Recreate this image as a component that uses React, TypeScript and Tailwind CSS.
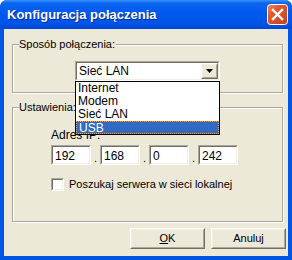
import * as React from "react";

const font = { fontFamily: '"Liberation Sans", Arial, sans-serif' };

function Sunken({ className = "", children }: { className?: string; children?: React.ReactNode }) {
  return (
    <div className={`border border-t-[#aca899] border-l-[#aca899] border-b-white border-r-white ${className}`}>
      <div className="h-full w-full border border-t-[#716f64] border-l-[#716f64] border-b-[#f1efe2] border-r-[#f1efe2] bg-white">
        {children}
      </div>
    </div>
  );
}

function Raised({ className = "", children }: { className?: string; children?: React.ReactNode }) {
  return (
    <div className={`border border-t-white border-l-white border-b-[#716f64] border-r-[#716f64] ${className}`}>
      <div className="flex h-full w-full items-center justify-center border border-t-[#f1efe2] border-l-[#f1efe2] border-b-[#aca899] border-r-[#aca899] bg-[#ece9d8]">
        {children}
      </div>
    </div>
  );
}

function Group({ label, className = "", children }: { label: string; className?: string; children?: React.ReactNode }) {
  return (
    <div
      className={`relative ml-2 w-[271px] border border-[#aca899] shadow-[inset_1px_1px_0_#fff,1px_1px_0_#fff] ${className}`}
    >
      <span className="absolute -top-[7px] left-[6px] bg-[#ece9d8] pr-[1px] text-[11px] leading-[13px] text-black">
        {label}
      </span>
      {children}
    </div>
  );
}

function CloseButton() {
  return (
    <svg width="21" height="21" viewBox="0 0 21 21">
      <defs>
        <linearGradient id="cb" x1="0" y1="0" x2="1" y2="1">
          <stop offset="0" stopColor="#f08a63" />
          <stop offset="0.35" stopColor="#e2582b" />
          <stop offset="1" stopColor="#c3401c" />
        </linearGradient>
      </defs>
      <rect x="0.5" y="0.5" width="20" height="20" rx="3" fill="url(#cb)" stroke="#fff" />
      <path d="M6 6 L15 15 M15 6 L6 15" stroke="#fff" strokeWidth="2.4" strokeLinecap="square" />
    </svg>
  );
}

const options = ["Internet", "Modem", "Sieć LAN", "USB"];

function IpField({ value }: { value: string }) {
  return (
    <Sunken className="h-[20px] w-[40px]">
      <div className="pl-[2px] pt-[2px] text-[12px] leading-[14px] text-black">{value}</div>
    </Sunken>
  );
}

export default function App() {
  const ip = ["192", "168", "0", "242"];
  return (
    <div className="h-[260px] w-[292px] bg-white" style={font}>
      <div className="flex h-full w-full flex-col overflow-hidden rounded-t-[7px] bg-[#0055e5]">
        <div className="flex h-[29px] shrink-0 items-center justify-between bg-[linear-gradient(to_bottom,#3d95ff_0%,#0a66f0_10%,#0058ee_45%,#0055e8_80%,#0046d6_100%)] pl-[7px] pr-[4px]">
          <span className="pt-[1px] text-[13px] font-bold text-white [text-shadow:1px_1px_0_#0a2a8c]">
            Konfiguracja połączenia
          </span>
          <CloseButton />
        </div>
        <div className="mx-[4px] mb-[4px] flex flex-1 flex-col bg-[#ece9d8] pb-[7px]">
          <Group label="Sposób połączenia:" className="mt-[15px] h-[49px]">
            <div className="pl-[62px] pt-[16px]">
              <div className="relative z-10 w-[145px]">
                <Sunken className="h-[20px] w-[145px]">
                  <div className="flex h-full items-center justify-between">
                    <span className="pl-[2px] text-[12px] leading-[14px] text-black">Sieć LAN</span>
                    <Raised className="h-[16px] w-[17px]">
                      <svg width="7" height="4" viewBox="0 0 7 4">
                        <path d="M0 0 H7 L3.5 4 Z" fill="#000" />
                      </svg>
                    </Raised>
                  </div>
                </Sunken>
                <ul className="absolute left-0 top-full w-[145px] border border-black bg-white">
                  {options.map((o) => (
                    <li
                      key={o}
                      className={`h-[13px] pl-[2px] text-[12px] leading-[13px] ${
                        o === "USB"
                          ? "border border-dotted border-[#e8a848] bg-[#316ac5] pl-[1px] leading-[11px] text-white"
                          : "text-black"
                      }`}
                    >
                      {o}
                    </li>
                  ))}
                </ul>
              </div>
            </div>
          </Group>

          <Group label="Ustawienia:" className="mt-[14px] h-[115px]">
            <div className="pl-[38px] pt-[21px]">
              <div className="text-[12px] leading-[13px] text-black">Adres IP:</div>
              <div className="mt-[3px] flex items-end">
                {ip.map((v, i) => (
                  <React.Fragment key={i}>
                    {i > 0 && (
                      <span className="w-[9px] pb-[1px] text-center text-[11px] leading-[11px] text-black">.</span>
                    )}
                    <IpField value={v} />
                  </React.Fragment>
                ))}
              </div>
              <div className="mt-[13px] flex items-center gap-[5px]">
                <Sunken className="h-[13px] w-[13px]" />
                <span className="text-[11px] leading-[13px] text-black">Poszukaj serwera w sieci lokalnej</span>
              </div>
            </div>
          </Group>

          <div className="mt-[6px] flex justify-end gap-[6px] pr-[2px]">
            <Raised className="h-[21px] w-[75px]">
              <span className="text-[11px] leading-[13px] text-black">
                <span className="underline">O</span>K
              </span>
            </Raised>
            <Raised className="h-[21px] w-[75px]">
              <span className="text-[11px] leading-[13px] text-black">Anuluj</span>
            </Raised>
          </div>
        </div>
      </div>
    </div>
  );
}
